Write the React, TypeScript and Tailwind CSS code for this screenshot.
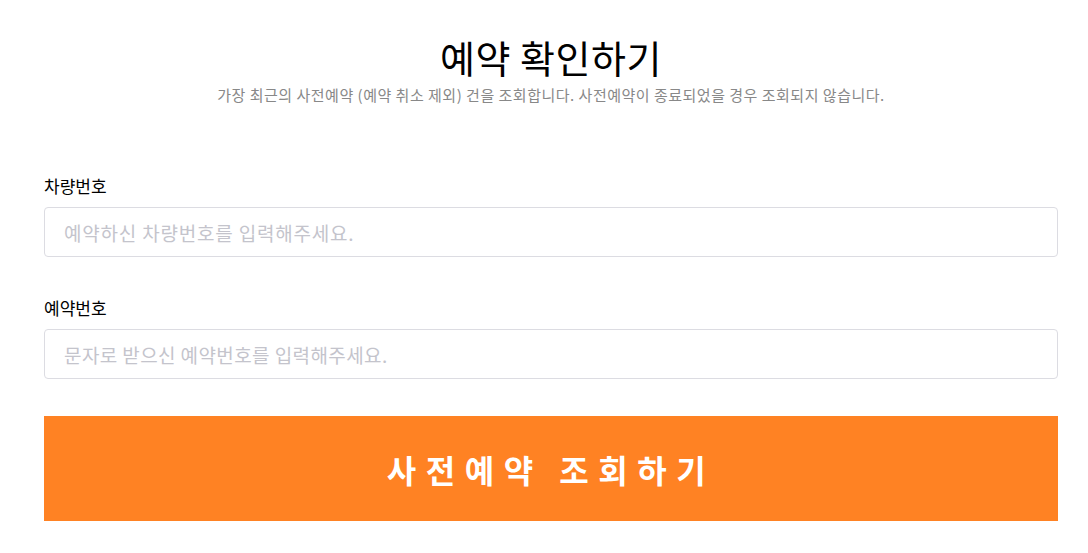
export default function App() {
  return (
    <div className="min-h-screen bg-white pl-[44px] pr-[30px] pt-[30px] text-black" style={{ fontFamily: '"Noto Sans CJK KR", "Noto Sans", sans-serif' }}>
      <div className="flex flex-col items-center">
        <h1 className="text-[38px] font-normal leading-[54px] tracking-[0.5px]">예약 확인하기</h1>
        <p className="mt-[1px] text-[15px] leading-[20px] tracking-[0.5px] text-[#888888]">
          가장 최근의 사전예약 (예약 취소 제외) 건을 조회합니다. 사전예약이 종료되었을 경우 조회되지 않습니다.
        </p>
      </div>

      <form className="mt-[69px]">
        <label className="block text-[17px] leading-[24px]">차량번호</label>
        <input
          className="mt-[9px] block h-[50px] w-full rounded-[4px] border border-[#dcdce2] px-[19px] text-[19px] tracking-[0.8px] outline-none placeholder:text-[#c4c4cc]"
          placeholder="예약하신 차량번호를 입력해주세요."
        />

        <label className="mt-[39px] block text-[17px] leading-[24px]">예약번호</label>
        <input
          className="mt-[9px] block h-[50px] w-full rounded-[4px] border border-[#dcdce2] px-[19px] text-[19px] tracking-[0.4px] outline-none placeholder:text-[#c4c4cc]"
          placeholder="문자로 받으신 예약번호를 입력해주세요."
        />

        <button
          type="button"
          className="mt-[37px] block h-[105px] w-full bg-[#ff8223] text-[32px] font-bold tracking-[9.5px] text-white"
        >
          사전예약 조회하기
        </button>
      </form>
    </div>
  );
}
